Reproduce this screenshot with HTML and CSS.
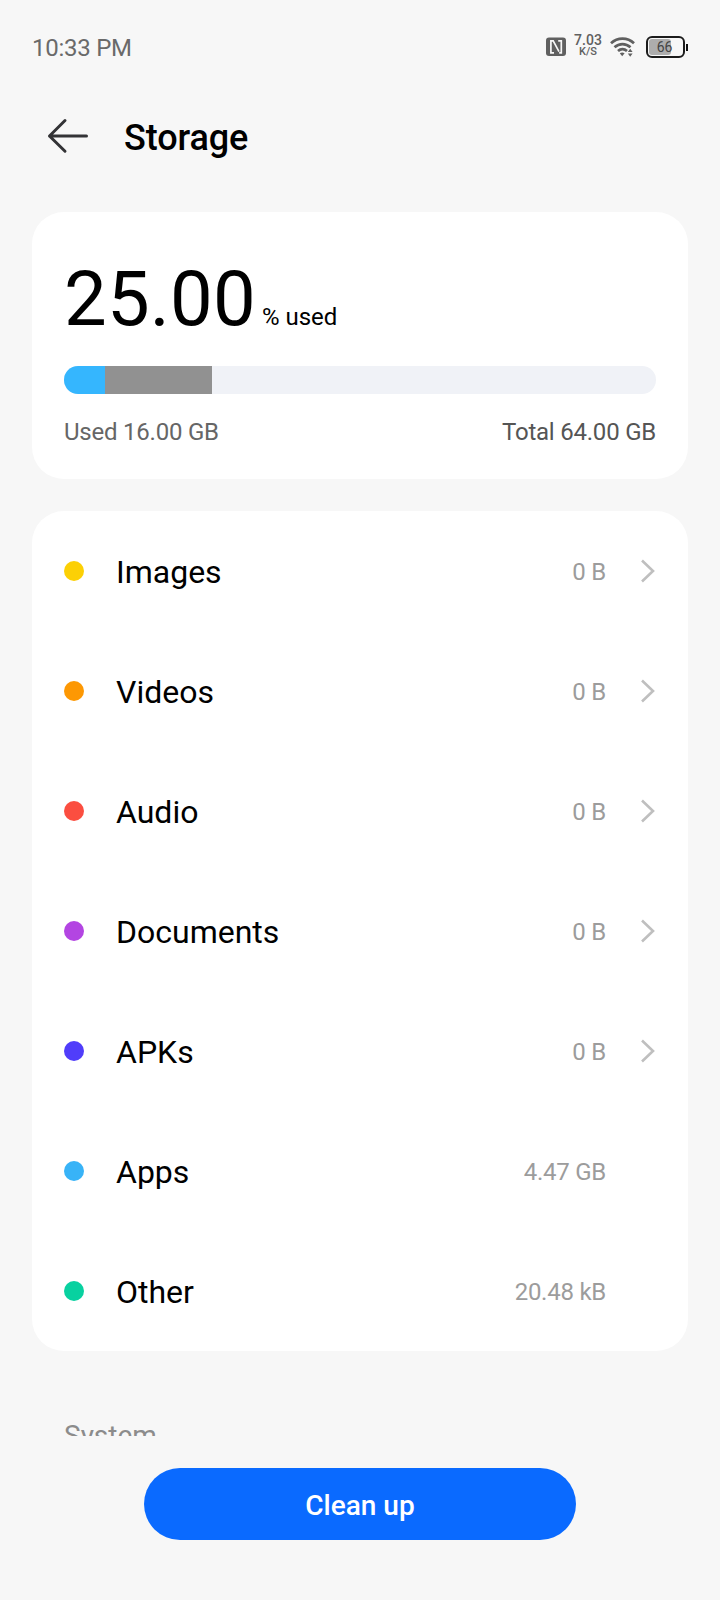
FILE: index.html
```
<!DOCTYPE html>
<html lang="en">

<head>
    <meta charset="UTF-8">
    <meta name="viewport" content="width=device-width, initial-scale=1.0">
    <title>Storage</title>
    <link rel="stylesheet" href="styles.css">
</head>

<body>
    <div class="screen">
        <div class="status-bar">
            <span class="time">10:33 PM</span>
            <div class="status-icons">
                <svg class="nfc" width="20" height="20" viewBox="0 0 20 20">
                    <rect x="0" y="0.5" width="20" height="18.5" rx="3" fill="#606060" />
                    <path d="M8 15.8H4.9V3.9H7.2L13 14.6M12.2 3.9H15.3V15.8H13.2" fill="none" stroke="#f7f7f7" stroke-width="1.7" />
                </svg>
                <div class="speed">
                    <span class="speed-value">7.03</span>
                    <span class="speed-unit">K/S</span>
                </div>
                <svg class="wifi" width="25" height="21" viewBox="0 0 25 21">
                    <g fill="none" stroke="#606060" stroke-width="2.7">
                        <path d="M1 6.3C7.5 0.1 17.5 0.1 24 6.3" />
                        <path d="M4.5 10.3C9.2 6 15.8 6 20.5 10.3" />
                        <path d="M8 14C10.7 11.6 14.3 11.6 17 14" />
                    </g>
                    <path d="M9.8 16.3Q12.2 14.8 14.6 16.3L12.2 19.3Z" fill="#606060" />
                    <path d="M17.8 15L20.2 11.8L22.6 15ZM17.8 16.4L20.2 19.8L22.6 16.4Z" fill="#606060" />
                </svg>
                <div class="battery">
                    <div class="battery-level"></div>
                    <span>66</span>
                </div>
                <div class="battery-tip"></div>
            </div>
        </div>

        <header class="header">
            <svg width="42" height="36" viewBox="0 0 42 36" fill="none" stroke="#333336" stroke-width="3" stroke-linecap="round" stroke-linejoin="round">
                <path d="M18 2.5L2.5 18L18 33.2M2.5 18H39.5" />
            </svg>
            <h1>Storage</h1>
        </header>

        <section class="card usage">
            <div class="percent">
                <span class="number">25.00</span>
                <span class="unit">% used</span>
            </div>
            <div class="bar">
                <div class="bar-apps"></div>
                <div class="bar-system"></div>
            </div>
            <div class="totals">
                <span>Used 16.00 GB</span>
                <span class="total">Total 64.00 GB</span>
            </div>
        </section>

        <ul class="card list">
            <li>
                <span class="dot images"></span>
                <span class="label">Images</span>
                <span class="size">0 B</span>
                <svg class="chevron" viewBox="0 0 16 24"><path d="M2 1.5L13 12L2 22.5" /></svg>
            </li>
            <li>
                <span class="dot videos"></span>
                <span class="label">Videos</span>
                <span class="size">0 B</span>
                <svg class="chevron" viewBox="0 0 16 24"><path d="M2 1.5L13 12L2 22.5" /></svg>
            </li>
            <li>
                <span class="dot audio"></span>
                <span class="label">Audio</span>
                <span class="size">0 B</span>
                <svg class="chevron" viewBox="0 0 16 24"><path d="M2 1.5L13 12L2 22.5" /></svg>
            </li>
            <li>
                <span class="dot documents"></span>
                <span class="label">Documents</span>
                <span class="size">0 B</span>
                <svg class="chevron" viewBox="0 0 16 24"><path d="M2 1.5L13 12L2 22.5" /></svg>
            </li>
            <li>
                <span class="dot apks"></span>
                <span class="label">APKs</span>
                <span class="size">0 B</span>
                <svg class="chevron" viewBox="0 0 16 24"><path d="M2 1.5L13 12L2 22.5" /></svg>
            </li>
            <li>
                <span class="dot apps"></span>
                <span class="label">Apps</span>
                <span class="size">4.47 GB</span>
            </li>
            <li>
                <span class="dot other"></span>
                <span class="label">Other</span>
                <span class="size">20.48 kB</span>
            </li>
        </ul>

        <h2 class="section-title">System</h2>

        <footer class="footer">
            <button type="button">Clean up</button>
        </footer>
    </div>
</body>

</html>
```
FILE: styles.css
```
* {
    box-sizing: border-box;
}

body {
    margin: 0;
    background: #f7f7f7;
    font-family: Roboto, sans-serif;
    color: #000;
}

.screen {
    display: flex;
    flex-direction: column;
    width: 720px;
    height: 1600px;
    overflow: hidden;
}

.status-bar {
    display: flex;
    justify-content: space-between;
    align-items: center;
    height: 94px;
    padding: 0 32px;
}

.time {
    padding-top: 2px;
    font-size: 24px;
    line-height: 28px;
    letter-spacing: -0.25px;
    color: #6a6a6a;
}

.status-icons {
    display: flex;
    align-items: center;
    color: #606060;
}

.speed {
    display: flex;
    flex-direction: column;
    align-items: center;
    width: 28px;
    margin: -3px 8px 0;
    font-weight: 500;
}

.speed-value {
    font-size: 14px;
    line-height: 13px;
}

.speed-unit {
    font-size: 11px;
    line-height: 10px;
}

.battery {
    position: relative;
    display: flex;
    justify-content: center;
    align-items: center;
    width: 39px;
    height: 22px;
    margin-left: 11px;
    border: 2px solid #1c1c1c;
    border-radius: 6px;
    font-size: 14px;
    color: #444;
}

.battery span {
    position: relative;
    margin-right: 2px;
}

.battery-level {
    position: absolute;
    left: 1px;
    top: 1px;
    width: 22px;
    height: 16px;
    border-radius: 3px;
    background: #adadad;
}

.battery-tip {
    width: 2px;
    height: 7px;
    margin-left: 1px;
    background: #111;
}

.header {
    display: flex;
    align-items: center;
    gap: 35px;
    height: 84px;
    padding-left: 47px;
}

.header h1 {
    margin: 0;
    padding-top: 3px;
    font-size: 36px;
    line-height: 42px;
    font-weight: 500;
    letter-spacing: -0.1px;
}

.card {
    margin: 0 32px;
    padding: 0 32px;
    border-radius: 32px;
    background: #fff;
}

.usage {
    height: 267px;
    margin-top: 34px;
    padding-top: 43px;
}

.percent {
    display: flex;
    align-items: baseline;
    gap: 6px;
    height: 111px;
}

.number {
    font-size: 76px;
    line-height: 88px;
    letter-spacing: 0.2px;
}

.unit {
    font-size: 24px;
}

.bar {
    display: flex;
    height: 28px;
    border-radius: 14px;
    overflow: hidden;
    background: #f0f2f7;
}

.bar-apps {
    width: 7%;
    background: #35b6fe;
}

.bar-system {
    width: 18%;
    background: #919191;
}

.totals {
    display: flex;
    justify-content: space-between;
    margin-top: 24px;
    font-size: 24px;
    line-height: 28px;
    letter-spacing: -0.22px;
    color: #666;
}

.total {
    color: #555;
}

.list {
    margin-top: 32px;
    list-style: none;
}

.list li {
    display: flex;
    align-items: center;
    height: 120px;
}

.dot {
    width: 20px;
    height: 20px;
    margin-right: 32px;
    border-radius: 50%;
}

.images {
    background: #fcd005;
}

.videos {
    background: #fd9803;
}

.audio {
    background: #fb4e40;
}

.documents {
    background: #b345e2;
}

.apks {
    background: #503dfa;
}

.apps {
    background: #38b3f7;
}

.other {
    background: #08d1a0;
}

.label {
    padding-top: 2px;
    font-size: 32px;
    line-height: 38px;
}

.size {
    margin-left: auto;
    margin-right: 50px;
    padding-top: 2px;
    font-size: 24px;
    line-height: 28px;
    letter-spacing: -0.25px;
    color: #9c9c9c;
}

.chevron {
    width: 16px;
    height: 24px;
    margin-left: -16px;
    fill: none;
    stroke: #bfbfbf;
    stroke-width: 2.6;
}

.section-title {
    height: 85px;
    margin: 0;
    padding: 67px 64px 0;
    font-size: 28px;
    line-height: 36px;
    font-weight: 400;
    color: #8c8c8c;
    overflow: hidden;
}

.footer {
    flex: 1;
    display: flex;
    justify-content: center;
    align-items: flex-start;
    padding-top: 32px;
    background: #f7f7f7;
}

.footer button {
    width: 432px;
    height: 72px;
    padding: 2px 0 0;
    border: none;
    border-radius: 36px;
    background: #0a6aff;
    font-family: inherit;
    font-size: 28px;
    font-weight: 500;
    color: #fff;
}
```
